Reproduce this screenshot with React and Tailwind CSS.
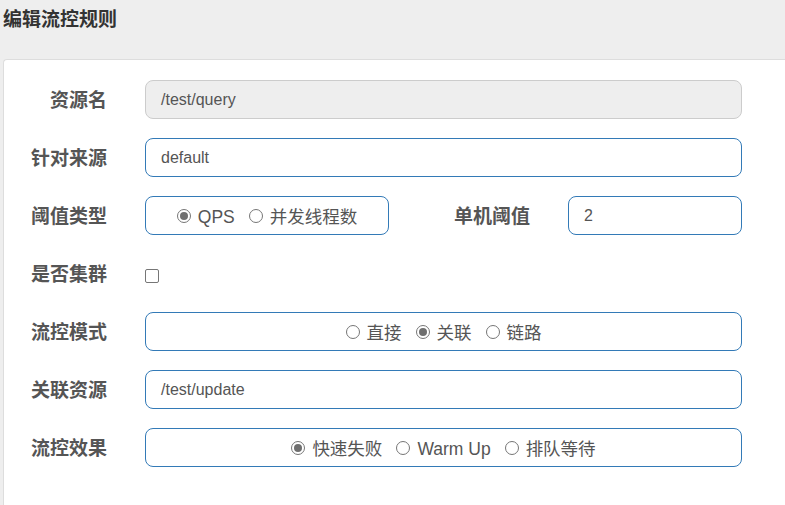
import React from "react";

const font = { fontFamily: '"Liberation Sans", "Noto Sans CJK SC", sans-serif' };

const Radio = ({ checked, label }) => (
  <span className="flex items-center gap-[7px]">
    <span className="w-[14px] h-[14px] rounded-full border border-[#767676] flex items-center justify-center bg-white">
      {checked && <span className="w-[8px] h-[8px] rounded-full bg-[#6f6f6f]" />}
    </span>
    <span className="text-[17.5px] text-[#555] pt-[3px]">{label}</span>
  </span>
);

const Label = ({ children, className = "w-[104px]" }) => (
  <div className={`${className} shrink-0 text-right text-[19px] font-bold text-[#555] pr-[38px] pt-[3px] box-content`}>
    {children}
  </div>
);

const Input = ({ value, disabled, className = "w-[597px]" }) => (
  <div
    className={`${className} h-[39px] rounded-lg border flex items-center px-[15px] text-[16px] text-[#555] ${
      disabled ? "bg-[#eeeeee] border-[#cccccc]" : "bg-white border-[#337ab7]"
    }`}
  >
    {value}
  </div>
);

const RadioBox = ({ options, className = "w-[597px]" }) => (
  <div className={`${className} h-[39px] rounded-lg border border-[#337ab7] bg-white flex items-center justify-center gap-[14px]`}>
    {options.map((o) => (
      <Radio key={o.label} checked={o.checked} label={o.label} />
    ))}
  </div>
);

const App = () => {
  return (
    <div className="w-[785px] h-[505px] bg-[#eeeeee] overflow-hidden" style={font}>
      {/* HEADER */}
      <div className="h-[59px] pl-[3px] pt-[6px]">
        <h2 className="text-[19px] font-bold text-[#333]">编辑流控规则</h2>
      </div>

      {/* CARD */}
      <div className="ml-[3px] w-[800px] h-[446px] bg-white border-l border-t border-[#dddddd] rounded-tl pt-[20px] flex flex-col gap-[19px]">
        <div className="flex items-center">
          <Label className="w-[65px] pl-[38px]">资源名</Label>
          <Input value="/test/query" disabled />
        </div>

        <div className="flex items-center">
          <Label className="w-[103px]">针对来源</Label>
          <Input value="default" />
        </div>

        <div className="flex items-center">
          <Label className="w-[103px]">阈值类型</Label>
          <RadioBox
            className="w-[244px]"
            options={[
              { label: "QPS", checked: true },
              { label: "并发线程数" },
            ]}
          />
          <Label className="w-[141px]">单机阈值</Label>
          <Input value="2" className="w-[174px]" />
        </div>

        <div className="flex items-center h-[39px]">
          <Label className="w-[103px]">是否集群</Label>
          <span className="w-[14px] h-[14px] mt-[4px] rounded-[2px] border border-[#767676] bg-white" />
        </div>

        <div className="flex items-center">
          <Label className="w-[103px]">流控模式</Label>
          <RadioBox
            options={[
              { label: "直接" },
              { label: "关联", checked: true },
              { label: "链路" },
            ]}
          />
        </div>

        <div className="flex items-center">
          <Label className="w-[103px]">关联资源</Label>
          <Input value="/test/update" />
        </div>

        <div className="flex items-center">
          <Label className="w-[103px]">流控效果</Label>
          <RadioBox
            options={[
              { label: "快速失败", checked: true },
              { label: "Warm Up" },
              { label: "排队等待" },
            ]}
          />
        </div>
      </div>
    </div>
  );
};

export default App;
